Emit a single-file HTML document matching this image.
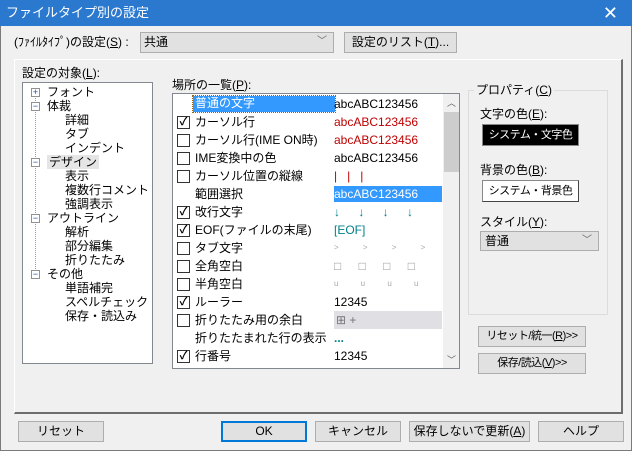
<!DOCTYPE html>
<html><head><meta charset="utf-8"><style>
*{box-sizing:border-box;margin:0;padding:0}
body{width:632px;height:451px;background:#f0f0f0;font-family:"Liberation Sans","Noto Sans CJK JP",sans-serif;font-size:12px;color:#000;position:relative;overflow:hidden}
.a{position:absolute;white-space:nowrap;line-height:14px}
.win{position:absolute;left:0;top:0;width:632px;height:451px;border:1px solid #7a7a7a;border-top:none}
.title{position:absolute;left:0;top:0;width:632px;height:26px;background:#2b79cf;color:#fff;font-size:13px;line-height:26px;padding-left:6px}
.btn{position:absolute;background:#e1e1e1;border:1px solid #adadad;text-align:center;line-height:18px;white-space:nowrap;overflow:hidden}
.box{position:absolute;background:#fff;border:1px solid #828790}
.cb{position:absolute;left:4px;width:13px;height:13px;border:1px solid #333;background:#fff;font-size:11px;line-height:11px;text-align:center;font-weight:bold}
.row{position:absolute;left:0;height:18px;width:270px}
.row .t{position:absolute;left:22px;top:2px;line-height:14px;white-space:nowrap}
.row .v{position:absolute;left:161px;top:2px;line-height:14px;white-space:nowrap}
.tr{position:absolute;line-height:14px;white-space:nowrap;background:#fff}
.pm{position:absolute;width:9px;height:9px;border:1px solid #919191;background:#fff;font-size:9px;line-height:7px;text-align:center;color:#1b4fa8}
.sm{font-size:11px;letter-spacing:-0.5px}
</style></head><body>
<div class="win"></div>
<div class="title">ファイルタイプ別の設定<span style="position:absolute;right:14px;top:0;font-size:18px">✕</span></div>
<div class="a" style="left:14px;top:35px">(ﾌｧｲﾙﾀｲﾌﾟ)の設定(<u>S</u>) :</div>
<div class="btn" style="left:140px;top:32px;width:194px;height:21px;text-align:left;padding-left:3px">共通<span style="position:absolute;right:6px;top:0;color:#666;font-size:10px">﹀</span></div>
<div class="btn" style="left:344px;top:32px;width:113px;height:21px">設定のリスト(<u>T</u>)...</div>
<div style="position:absolute;left:14px;top:59px;width:609px;height:355px;border:1px solid #fff;border-right:2px solid #6d6d6d;border-bottom:2px solid #6d6d6d"></div>
<div class="a" style="left:22px;top:66px">設定の対象(<u>L</u>):</div>
<div class="box" style="left:22px;top:82px;width:131px;height:282px">
<div style="position:absolute;left:12px;top:8px;height:188px;border-left:1px dotted #999"></div>
<div class="pm" style="left:8px;top:5px">+</div><div class="tr" style="left:24px;top:2px">フォント</div>
<div class="pm" style="left:8px;top:19px">−</div><div class="tr" style="left:24px;top:16px">体裁</div>
<div class="tr" style="left:42px;top:30px">詳細</div><div class="tr" style="left:42px;top:44px">タブ</div><div class="tr" style="left:42px;top:58px">インデント</div>
<div class="pm" style="left:8px;top:75px">−</div><div class="tr" style="left:24px;top:72px;background:#e5e5e5;padding:0 2px">デザイン</div>
<div class="tr" style="left:42px;top:86px">表示</div><div class="tr" style="left:42px;top:100px">複数行コメント</div><div class="tr" style="left:42px;top:114px">強調表示</div>
<div class="pm" style="left:8px;top:131px">−</div><div class="tr" style="left:24px;top:128px">アウトライン</div>
<div class="tr" style="left:42px;top:142px">解析</div><div class="tr" style="left:42px;top:156px">部分編集</div><div class="tr" style="left:42px;top:170px">折りたたみ</div>
<div class="pm" style="left:8px;top:187px">−</div><div class="tr" style="left:24px;top:184px">その他</div>
<div class="tr" style="left:42px;top:198px">単語補完</div><div class="tr" style="left:42px;top:212px">スペルチェック</div><div class="tr" style="left:42px;top:226px">保存・読込み</div>
</div>
<div class="a" style="left:172px;top:78px">場所の一覧(<u>P</u>):</div>
<div class="box" style="left:172px;top:93px;width:288px;height:276px;overflow:hidden">
<div class="row" style="top:1px"><div class="t" style="left:20px;top:1px;width:142px;height:16px;background:#3399ff;color:#fff;outline:1px dotted #a06000;padding-left:2px">普通の文字</div><div class="v">abcABC123456</div></div>
<div class="row" style="top:19px"><div class="cb" style="top:3px">✓</div><div class="t">カーソル行</div><div class="v" style="color:#c00000">abcABC123456</div></div>
<div class="row" style="top:37px"><div class="cb" style="top:3px"></div><div class="t">カーソル行(IME ON時)</div><div class="v" style="color:#c00000">abcABC123456</div></div>
<div class="row" style="top:55px"><div class="cb" style="top:3px"></div><div class="t">IME変換中の色</div><div class="v">abcABC123456</div></div>
<div class="row" style="top:73px"><div class="cb" style="top:3px"></div><div class="t">カーソル位置の縦線</div><div class="v" style="color:#c00000">|&nbsp;&nbsp;&nbsp;|&nbsp;&nbsp;&nbsp;|</div></div>
<div class="row" style="top:91px"><div class="t">範囲選択</div><div class="v" style="top:1px;background:#3399ff;color:#fff;width:108px;height:16px;line-height:16px">abcABC123456</div></div>
<div class="row" style="top:109px"><div class="cb" style="top:3px">✓</div><div class="t">改行文字</div><div class="v" style="color:#00808a;word-spacing:15px">↓ ↓ ↓ ↓</div></div>
<div class="row" style="top:127px"><div class="cb" style="top:3px">✓</div><div class="t">EOF(ファイルの末尾)</div><div class="v" style="color:#00808a">[EOF]</div></div>
<div class="row" style="top:145px"><div class="cb" style="top:3px"></div><div class="t">タブ文字</div><div class="v" style="color:#aaa;font-size:8px;word-spacing:22px">&gt; &gt; &gt; &gt;</div></div>
<div class="row" style="top:163px"><div class="cb" style="top:3px"></div><div class="t">全角空白</div><div class="v" style="color:#999;word-spacing:14px">□ □ □ □</div></div>
<div class="row" style="top:181px"><div class="cb" style="top:3px"></div><div class="t">半角空白</div><div class="v" style="color:#aaa;font-size:8px;word-spacing:20px">u u u u</div></div>
<div class="row" style="top:199px"><div class="cb" style="top:3px">✓</div><div class="t">ルーラー</div><div class="v">12345</div></div>
<div class="row" style="top:217px"><div class="cb" style="top:3px"></div><div class="t">折りたたみ用の余白</div><div class="v" style="top:0;height:18px;width:108px;background:#e0dfe3;color:#777;padding-left:2px;line-height:18px">⊞ +</div></div>
<div class="row" style="top:235px"><div class="t">折りたたまれた行の表示</div><div class="v" style="color:#00808a;font-weight:bold">...</div></div>
<div class="row" style="top:253px"><div class="cb" style="top:3px">✓</div><div class="t">行番号</div><div class="v">12345</div></div>
<div style="position:absolute;left:270px;top:0;width:17px;height:274px;background:#f0f0f0"><div style="position:absolute;left:1px;top:18px;width:15px;height:60px;background:#cdcdcd"></div><div style="position:absolute;top:2px;width:17px;text-align:center;font-size:9px;color:#606060">︿</div><div style="position:absolute;bottom:2px;width:17px;text-align:center;font-size:9px;color:#606060">﹀</div></div>
</div>
<div style="position:absolute;left:468px;top:90px;width:140px;height:225px;border:1px solid #dcdcdc"></div>
<div class="a" style="left:474px;top:83px;background:#f0f0f0;padding:0 2px">プロパティ(<u>C</u>)</div>
<div class="a" style="left:480px;top:107px">文字の色(<u>E</u>):</div>
<div class="btn sm" style="left:482px;top:124px;width:97px;height:22px;background:#000;color:#fff;border:1px solid #888;line-height:20px">システム・文字色</div>
<div class="a" style="left:480px;top:163px">背景の色(<u>B</u>):</div>
<div class="btn sm" style="left:482px;top:180px;width:97px;height:22px;background:#fff;border:1px solid #888;border-right-color:#444;border-bottom-color:#444;line-height:20px">システム・背景色</div>
<div class="a" style="left:480px;top:215px">スタイル(<u>Y</u>):</div>
<div class="btn" style="left:480px;top:231px;width:119px;height:20px;text-align:left;padding-left:4px">普通<span style="position:absolute;right:6px;top:0;color:#666;font-size:10px">﹀</span></div>
<div class="btn sm" style="left:478px;top:326px;width:108px;height:21px">リセット/統一(<u>R</u>)&gt;&gt;</div>
<div class="btn sm" style="left:478px;top:353px;width:108px;height:21px">保存/読込(<u>V</u>)&gt;&gt;</div>
<div class="btn" style="left:18px;top:421px;width:86px;height:21px">リセット</div>
<div class="btn" style="left:221px;top:421px;width:86px;height:21px;border:2px solid #0078d7;line-height:17px">OK</div>
<div class="btn" style="left:315px;top:421px;width:86px;height:21px">キャンセル</div>
<div class="btn" style="left:409px;top:421px;width:121px;height:21px">保存しないで更新(<u>A</u>)</div>
<div class="btn" style="left:538px;top:421px;width:86px;height:21px">ヘルプ</div>
</body></html>
